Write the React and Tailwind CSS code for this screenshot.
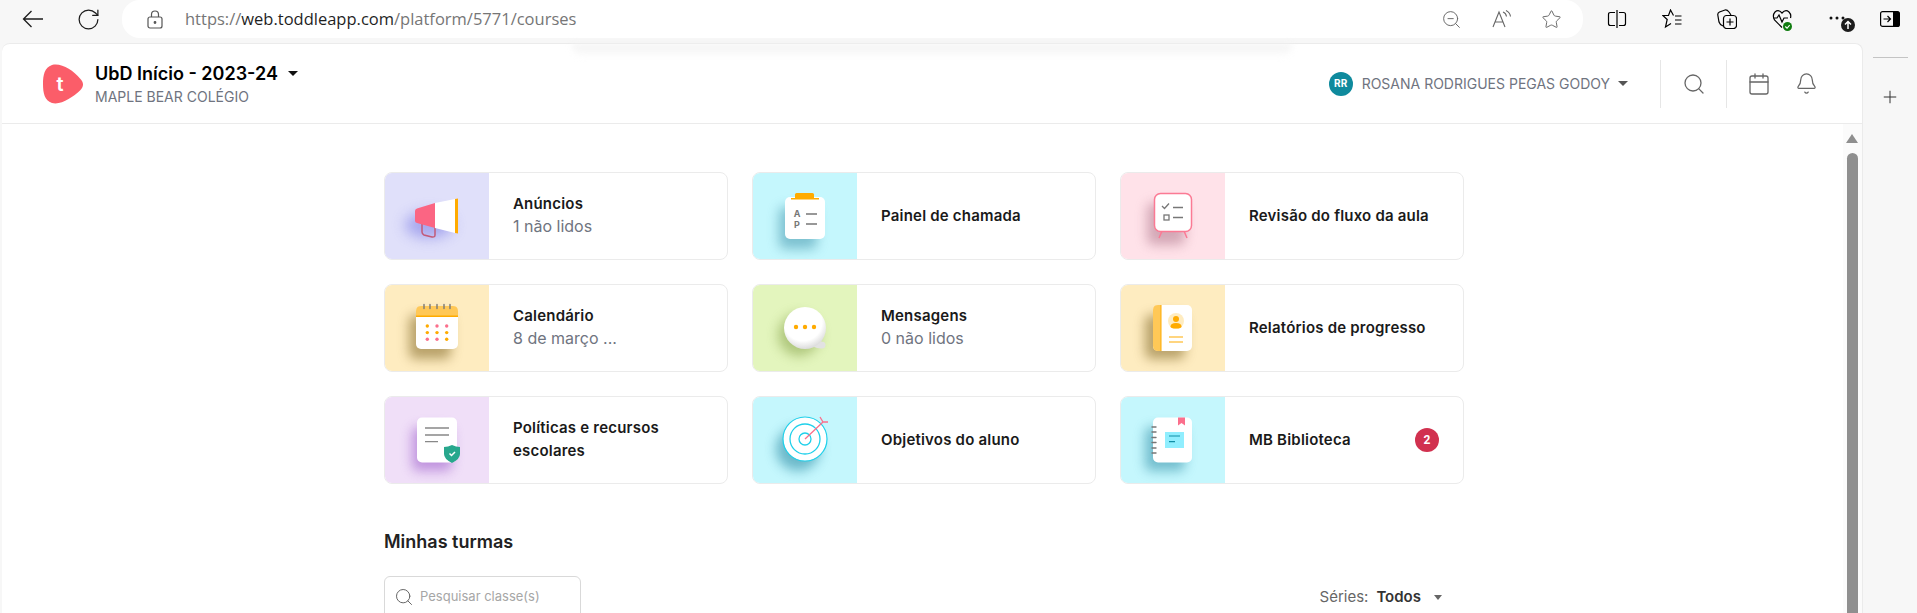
import { RotateCw, ZoomOut, Star, Plus, Search, Calendar, Bell } from "lucide-react";

const titleFont = "font-['Inter','Noto_Sans',sans-serif]";

function Megaphone() {
  return (
    <svg viewBox="0 0 105 88" className="w-[105px] h-[88px]">
      <ellipse cx="44" cy="52" rx="24" ry="13" fill="#7f7fe6" opacity=".6" className="blur-[7px]" />
      <path d="M37 49v10q0 2 2 3l8 2q3 .5 3-2v-8" fill="none" stroke="#c25a78" strokeWidth="1.500" />
      <path d="M30 38q0-2 2-2.500L50 30v25L32 50q-2-.5-2-2z" fill="#fb6583" />
      <path d="M50 30l20-4v34l-20-5z" fill="#fff" />
      <path d="M70 26l3-.5v35l-3-.5z" fill="#ffab00" />
    </svg>
  );
}

function Attendance() {
  return (
    <svg viewBox="0 0 105 88" className="w-[105px] h-[88px]">
      <rect x="26" y="34" width="38" height="42" rx="6" fill="#4d9db2" opacity=".6" className="blur-[6px]" />
      <rect x="32" y="24" width="40" height="42" rx="5" fill="#fff" />
      <rect x="42" y="20" width="19" height="6" rx="1.500" fill="#ffab00" />
      <rect x="38" y="25" width="28" height="1.500" fill="#ffab00" />
      <text x="44" y="44" fontSize="9" fontWeight="700" fill="#777" textAnchor="middle" fontFamily="Inter">A</text>
      <text x="44" y="55" fontSize="9" fontWeight="700" fill="#777" textAnchor="middle" fontFamily="Inter">P</text>
      <path d="M53 41h11M53 51h11" stroke="#777" strokeWidth="1.400" />
    </svg>
  );
}

function Board() {
  return (
    <svg viewBox="0 0 105 88" className="w-[105px] h-[88px]">
      <rect x="26" y="30" width="38" height="42" rx="6" fill="#b0788c" opacity=".55" className="blur-[6px]" />
      <path d="M41 58l-3 7M63 58l3 7" stroke="#fb7a94" strokeWidth="1.500" />
      <rect x="33.500" y="20.500" width="37" height="38" rx="6" fill="#fff" stroke="#fb7a94" strokeWidth="1.500" />
      <path d="M41 33l2.500 2.500 4.500-5M52 34.500h10M52 44.500h10" fill="none" stroke="#777" strokeWidth="1.300" />
      <rect x="43" y="42" width="5" height="5" fill="none" stroke="#777" strokeWidth="1.300" />
    </svg>
  );
}

function CalendarArt() {
  const colors = ["#ffab00", "#fb6f8c", "#fb6f8c", "#ffab00", "#ffab00", "#ffab00", "#fb6f8c", "#fb6f8c", "#ffab00"];
  return (
    <svg viewBox="0 0 105 88" className="w-[105px] h-[88px]">
      <rect x="24" y="30" width="42" height="44" rx="6" fill="#8a7030" opacity=".6" className="blur-[6px]" />
      <rect x="31" y="21" width="42" height="43" rx="5" fill="#fff" />
      <path d="M31 31v-5q0-5 5-5h32q5 0 5 5v5z" fill="#ffc857" />
      <rect x="31" y="30.500" width="42" height="1.500" fill="#ffab00" />
      <path d="M39 19.500v4M45 19.500v4M52 19.500v4M59 19.500v4M65 19.500v4" stroke="#777" strokeWidth="1.400" strokeLinecap="round" />
      {colors.map((c, i) => (
        <circle key={i} cx={42.300 + (i % 3) * 9.700} cy={41 + Math.floor(i / 3) * 6.600} r="1.700" fill={c} />
      ))}
    </svg>
  );
}

function Chat() {
  return (
    <svg viewBox="0 0 105 88" className="w-[105px] h-[88px]">
      <circle cx="46" cy="50" r="21" fill="#93ae5a" opacity=".65" className="blur-[6px]" />
      <defs>
        <radialGradient id="chatFill" cx="45%" cy="35%" r="65%">
          <stop offset="70%" stopColor="#fff" />
          <stop offset="100%" stopColor="#dcdcdc" />
        </radialGradient>
      </defs>
      <path d="M66 54q1 3 5 3q2 1 1.500 4q-1 2.500-3 2.500q-4 .5-10-2z" fill="#e2e2e2" />
      <circle cx="52" cy="43" r="21" fill="url(#chatFill)" />
      <circle cx="43" cy="42" r="2.200" fill="#ffab00" />
      <circle cx="52" cy="42" r="2.200" fill="#ffab00" />
      <circle cx="61" cy="42" r="2.200" fill="#ffab00" />
    </svg>
  );
}

function ReportBook() {
  return (
    <svg viewBox="0 0 105 88" className="w-[105px] h-[88px]">
      <rect x="24" y="30" width="40" height="44" rx="6" fill="#8a7030" opacity=".6" className="blur-[6px]" />
      <rect x="32" y="20" width="39" height="46" rx="5" fill="#fff" />
      <path d="M40 20h-3q-5 0-5 5v36q0 5 5 5h3z" fill="#ffc857" />
      <path d="M40 20v46" stroke="#ffab00" strokeWidth="1" />
      <circle cx="55" cy="36" r="8" fill="#ffecc0" />
      <circle cx="55" cy="34" r="3" fill="#ffab00" />
      <path d="M49.500 41.500q0-3.500 5.500-3.500t5.500 3.500q0 2-5.500 2t-5.500-2z" fill="#ffab00" />
      <path d="M48 52h14M48 57h14" stroke="#ffab00" strokeWidth="1.200" />
    </svg>
  );
}

function PolicyDoc() {
  return (
    <svg viewBox="0 0 105 88" className="w-[105px] h-[88px]">
      <rect x="27" y="30" width="40" height="44" rx="6" fill="#a66cd0" opacity=".65" className="blur-[6px]" />
      <rect x="32" y="20.500" width="40" height="45" rx="5" fill="#fff" />
      <path d="M40 31h24M40 38h24M40 44.700h13" stroke="#888" strokeWidth="1.300" />
      <path d="M67 48q4 2 8 2v7q0 5-8 9q-8-4-8-9v-7q4 0 8-2z" fill="#28a78d" />
      <path d="M64.500 56.500l2 2 3.500-3.500" fill="none" stroke="#fff" strokeWidth="1.500" />
    </svg>
  );
}

function Target() {
  return (
    <svg viewBox="0 0 105 88" className="w-[105px] h-[88px]">
      <circle cx="45" cy="52" r="22" fill="#3c97ae" opacity=".65" className="blur-[6px]" />
      <circle cx="52" cy="42" r="22" fill="#fff" stroke="#1fd0ea" strokeWidth="1.200" />
      <circle cx="52" cy="42" r="15" fill="none" stroke="#1fd0ea" strokeWidth="1.300" />
      <circle cx="52" cy="42" r="6" fill="none" stroke="#1fd0ea" strokeWidth="1.300" />
      <path d="M52 42l18-17M67 20l3 5 5 0" fill="none" stroke="#fb6f8c" strokeWidth="1.300" />
    </svg>
  );
}

function Notebook() {
  return (
    <svg viewBox="0 0 105 88" className="w-[105px] h-[88px]">
      <rect x="24" y="30" width="40" height="44" rx="6" fill="#3c97ae" opacity=".6" className="blur-[6px]" />
      <rect x="32" y="20.500" width="39" height="45" rx="5" fill="#fff" />
      <path d="M57 20.500h7v8l-3.500-2.500-3.500 2.500z" fill="#fb6f8c" />
      <rect x="44" y="35" width="19" height="16" fill="#90eefe" />
      <path d="M48 39h11M48 44.700h6" stroke="#0f8ea5" strokeWidth="1.200" />
      <path d="M31 30h4M31 35h4M31 40.500h4M31 45.500h4M31 51h4M31 56h4" stroke="#777" strokeWidth="1.400" strokeLinecap="round" />
    </svg>
  );
}

function Card({ bg, art, title, sub, badge }) {
  return (
    <div className="h-[88px] rounded-lg border border-[#ebebeb] flex overflow-hidden bg-white">
      <div className={`w-[104px] shrink-0 overflow-hidden ${bg}`}>{art}</div>
      <div className="flex-1 flex items-center justify-between pl-6 pr-6">
        <div className={`${titleFont} pb-[2px]`}>
          <div className="text-[15px] leading-[23px] font-semibold text-[#1a1a1a] tracking-[0.2px]">{title}</div>
          {sub && <div className="text-[16px] leading-[23px] text-[#6f7480]">{sub}</div>}
        </div>
        {badge && (
          <div className="w-6 h-6 rounded-full bg-[#d1314f] text-white text-[12px] font-bold flex items-center justify-center font-['Roboto',sans-serif]">
            {badge}
          </div>
        )}
      </div>
    </div>
  );
}

function BrowserBar() {
  return (
    <div className="h-[43px] flex items-start text-[#1c1c1c]">
      <div className="w-[122px] h-[38px] flex items-center pl-[22px] shrink-0">
        <svg viewBox="0 0 22 18" className="w-[22px] h-[18px]" fill="none" stroke="currentColor" strokeWidth="1.300">
          <path d="M21 9H1.500M9.500 1L1.500 9l8 8" />
        </svg>
        <RotateCw size={25} strokeWidth={1.200} className="ml-[32px]" />
      </div>
      <div className="w-[1461px] h-[38px] bg-white rounded-[18px] flex items-center shrink-0">
        <svg viewBox="0 0 16 19" className="ml-[25px] w-4 h-[19px] text-[#555]" fill="none" stroke="currentColor" strokeWidth="1.200">
          <path d="M4.500 7V4.500a3.500 3.500 0 0 1 7 0V7" />
          <rect x="1" y="7" width="14" height="11" rx="2" />
          <circle cx="8" cy="12.500" r=".8" fill="currentColor" />
        </svg>
        <div className="ml-[22px] text-[16.500px] font-['Open_Sans',sans-serif] text-[#767676] flex-1 min-w-0">
          https://<span className="text-[#1f1f1f]">web.toddleapp.com</span>/platform/5771/courses
        </div>
        <ZoomOut size={21} strokeWidth={1.100} className="text-[#666] mr-[30px]" />
        <svg viewBox="0 0 20 18" className="w-5 h-[18px] text-[#666] mr-[29px]" fill="none" stroke="currentColor" strokeWidth="1.100">
          <path d="M1 17L7 2l6 15M3 12h8M11 2q3 1 3.500 4.500M14 .5q4 2 4.500 6" />
        </svg>
        <Star size={21} strokeWidth={1.100} className="text-[#666] mr-[21px]" />
      </div>
      <div className="flex-1 h-[38px] flex items-center pl-[24px] text-black">
        <svg viewBox="0 0 20 20" className="w-5 h-5 shrink-0" fill="none" stroke="currentColor" strokeWidth="1.200">
          <path d="M8 3.500H3.500q-2 0-2 2v9q0 2 2 2H8M12 3.500h4.500q2 0 2 2v9q0 2-2 2H12M10 1v18" />
        </svg>
        <svg viewBox="0 0 20 20" className="w-5 h-5 shrink-0 ml-[35px]" fill="none" stroke="currentColor" strokeWidth="1.200">
          <path d="M11.500 6.500L8.500 1 6.500 6.500H.8l4.400 4L3.500 18l5.500-3.500M13 7h6.500M13 11h6.500M13 15h6.500" />
        </svg>
        <svg viewBox="0 0 20 20" className="w-5 h-5 shrink-0 ml-[35px]" fill="none" stroke="currentColor" strokeWidth="1.200">
          <path d="M6 17Q3 16 2 13L.8 6q-.3-2 1.700-3L8 1q2-.5 4 2l2 3" />
          <rect x="6.500" y="6.500" width="13" height="13" rx="3" />
          <path d="M13 9.500v7M9.500 13h7" />
        </svg>
        <div className="relative w-5 h-5 shrink-0 ml-[35px]">
          <svg viewBox="0 0 20 20" className="w-5 h-5" fill="none" stroke="currentColor" strokeWidth="1.200">
            <path d="M10 18.500L2.500 11Q0 6.500 3 3q3.500-3 7 1 3.500-4 7-1 2.500 2.500 1.500 6M1 9h4l2-3 3 7 2-4h4" />
          </svg>
          <div className="absolute right-0 -bottom-[2px] w-[9px] h-[9px] rounded-full bg-[#107c10] flex items-center justify-center">
            <svg viewBox="0 0 8 8" className="w-[7px] h-[7px]" fill="none" stroke="#fff" strokeWidth="1.300">
              <path d="M1.500 4l2 2 3-3.500" />
            </svg>
          </div>
        </div>
        <div className="relative w-[17px] h-5 shrink-0 ml-[37px]">
          <svg viewBox="0 0 17 4" className="absolute left-0 top-[7px] w-[17px] h-1" fill="#111">
            <circle cx="2" cy="2" r="1.500" />
            <circle cx="8" cy="2" r="1.500" />
            <circle cx="14" cy="2" r="1.500" />
          </svg>
          <div className="absolute left-[12px] top-[9px] w-[14px] h-[14px] rounded-full bg-[#1c1c1c] flex items-center justify-center">
            <svg viewBox="0 0 10 10" className="w-[10px] h-[10px]" fill="none" stroke="#fff" strokeWidth="1.500">
              <path d="M5 9V1.500M2 4.500l3-3 3 3" />
            </svg>
          </div>
        </div>
        <svg viewBox="0 0 20 16" className="w-5 h-4 shrink-0 ml-[34px]">
          <rect x=".6" y=".6" width="18.800" height="14.800" rx="2" fill="none" stroke="#000" strokeWidth="1.200" />
          <path d="M13 .6h4.500q2 0 2 2v11q0 2-2 2H13z" fill="#000" />
          <path d="M3.500 8h6.500M7.500 5l3 3-3 3" fill="none" stroke="#000" strokeWidth="1.200" />
        </svg>
      </div>
    </div>
  );
}

function Header() {
  return (
    <div className="h-[80px] border-b border-[#ebebeb] flex items-center pl-[41px] shrink-0">
      <svg viewBox="0 0 40 40" className="w-[40px] h-[40px] shrink-0">
        <path d="M9 1C18-1.500 30 6 37 14.500c4 4 4 8 0 12C30 33 18 41.500 9 39 1.500 36.500 0 29 0 20S1.500 3.500 9 1z" fill="#fb5d69" />
        <text x="17" y="27" fontSize="20" fontWeight="600" fill="#fff" textAnchor="middle" fontFamily="Inter">t</text>
      </svg>
      <div className="ml-[12px] flex flex-col">
        <div className="flex items-center gap-[10px] text-[18px] leading-[26px] font-semibold text-black font-['Inter',sans-serif]">
          UbD Início - 2023-24
          <div className="w-0 h-0 border-x-[5px] border-x-transparent border-t-[5px] border-t-[#111]" />
        </div>
        <div className="text-[14px] leading-[20px] text-[#6f7480] font-['Inter',sans-serif]">MAPLE BEAR COLÉGIO</div>
      </div>
      <div className="ml-auto flex items-center h-[48px]">
        <div className="w-6 h-6 rounded-full bg-[#0f8a9d] text-white text-[10px] font-bold flex items-center justify-center font-['Inter',sans-serif]">RR</div>
        <div className="ml-[9px] text-[14px] text-[#6f7480] font-['Inter',sans-serif] whitespace-nowrap">ROSANA RODRIGUES PEGAS GODOY</div>
        <div className="ml-[8px] w-0 h-0 border-x-[5px] border-x-transparent border-t-[5px] border-t-[#555]" />
        <div className="ml-[32px] w-px h-full bg-[#e6e6e6]" />
        <Search size={24} strokeWidth={1.300} className="ml-[21px] text-[#666]" />
        <div className="ml-[20px] w-px h-full bg-[#e6e6e6]" />
        <Calendar size={24} strokeWidth={1.300} className="ml-[20px] text-[#666]" />
        <Bell size={23} strokeWidth={1.300} className="ml-[24px] mr-[44px] text-[#666]" />
      </div>
    </div>
  );
}

export default function App() {
  return (
    <div className="w-[1917px] h-[613px] overflow-hidden bg-[#f7f7f7]">
      <BrowserBar />
      <div className="flex h-[570px]">
        <div className="relative ml-[2px] w-[1861px] bg-white rounded-t-lg flex flex-col shrink-0 border-r border-t border-[#ebebeb]">
          <div className="absolute left-[570px] top-0 w-[720px] h-[14px] bg-gradient-to-b from-[#f2f2f2] to-transparent rounded-b-full blur-[3px]" />
          <Header />
          <div className="flex flex-1 min-h-0">
            <div className="flex-1 pl-[382px] pt-[48px]">
              <div className="grid grid-cols-[344px_344px_344px] gap-x-[24px] gap-y-[24px]">
                <Card bg="bg-[#e0e0fa]" art={<Megaphone />} title="Anúncios" sub="1 não lidos" />
                <Card bg="bg-[#c5f7fd]" art={<Attendance />} title="Painel de chamada" />
                <Card bg="bg-[#ffe2e9]" art={<Board />} title="Revisão do fluxo da aula" />
                <Card bg="bg-[#feecc0]" art={<CalendarArt />} title="Calendário" sub="8 de março ..." />
                <Card bg="bg-[#e3f5bd]" art={<Chat />} title="Mensagens" sub="0 não lidos" />
                <Card bg="bg-[#feecc0]" art={<ReportBook />} title="Relatórios de progresso" />
                <Card bg="bg-[#f0dff8]" art={<PolicyDoc />} title="Políticas e recursos escolares" />
                <Card bg="bg-[#c5f7fd]" art={<Target />} title="Objetivos do aluno" />
                <Card bg="bg-[#c5f7fd]" art={<Notebook />} title="MB Biblioteca" badge="2" />
              </div>
              <div className="mt-[45px] text-[18px] leading-[26px] font-semibold text-[#222] font-['Inter',sans-serif]">Minhas turmas</div>
              <div className="mt-[21px] w-[1080px] flex items-start justify-between">
                <div className="w-[197px] h-[42px] rounded-t-md border border-[#d9d9d9] flex items-center pl-[9px] gap-[6px] shrink-0">
                  <Search size={20} strokeWidth={1.200} className="text-[#666]" />
                  <span className="text-[13px] text-[#a6a6a6] font-['Inter',sans-serif]">Pesquisar classe(s)</span>
                </div>
                <div className="h-[42px] flex items-center text-[15px] text-[#666] font-['Inter',sans-serif] mr-[22px]">
                  Séries:
                  <span className="ml-[8px] font-semibold text-[#333]">Todos</span>
                  <div className="ml-[13px] w-0 h-0 border-x-[4px] border-x-transparent border-t-[5px] border-t-[#666]" />
                </div>
              </div>
            </div>
            <div className="w-[19px] bg-[#fbfbfb] flex flex-col items-start pt-[10px] pl-[3px] shrink-0">
              <div className="w-0 h-0 border-x-[6px] border-x-transparent border-b-[9px] border-b-[#8f8f8f]" />
              <div className="mt-[10px] ml-px w-[11px] flex-1 rounded-t-full bg-[#8f8f8f]" />
            </div>
          </div>
        </div>
        <div className="flex-1 flex flex-col items-center pt-[14px]">
          <div className="w-[35px] h-px bg-[#c4c4c4]" />
          <Plus size={20} strokeWidth={1.200} className="mt-[29px] text-[#333]" />
        </div>
      </div>
    </div>
  );
}
